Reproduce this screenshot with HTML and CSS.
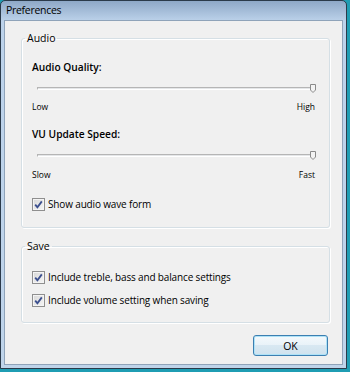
FILE: index.html
```html
<!DOCTYPE html>
<html lang="en">

<head>
	<meta charset="utf-8">
	<title>Preferences</title>
	<link rel="stylesheet" href="styles.css">
</head>

<body>

	<div class="window">
		<div class="titlebar">Preferences</div>

		<div class="client">

			<!-- *** Audio group *** -->
			<fieldset class="group group-audio">
				<legend>Audio</legend>
				<div class="group-body">
					<p class="setting-label">Audio Quality:</p>
					<div class="slider">
						<div class="track"></div>
						<svg class="thumb" width="6" height="9" viewBox="0 0 6 9">
							<path d="M0.5 0.5 H5.5 V6 L3 8.5 L0.5 6 Z" fill="#f3f3f3" stroke="#8a8a8a" />
						</svg>
					</div>
					<div class="ticks"><span>Low</span><span>High</span></div>

					<p class="setting-label label-second">VU Update Speed:</p>
					<div class="slider">
						<div class="track"></div>
						<svg class="thumb" width="6" height="9" viewBox="0 0 6 9">
							<path d="M0.5 0.5 H5.5 V6 L3 8.5 L0.5 6 Z" fill="#f3f3f3" stroke="#8a8a8a" />
						</svg>
					</div>
					<div class="ticks ticks-second"><span>Slow</span><span>Fast</span></div>

					<label class="check check-wave">
						<span class="box"><svg width="9" height="9" viewBox="0 0 9 9"><path d="M1.2 4.6 L3.4 7.2 L7.8 1.4" fill="none" stroke="#3b4f8e" stroke-width="1.8" /></svg></span>
						Show audio wave form
					</label>
				</div>
			</fieldset>

			<!-- *** Save group *** -->
			<fieldset class="group group-save">
				<legend>Save</legend>
				<div class="group-body">
					<label class="check check-first">
						<span class="box"><svg width="9" height="9" viewBox="0 0 9 9"><path d="M1.2 4.6 L3.4 7.2 L7.8 1.4" fill="none" stroke="#3b4f8e" stroke-width="1.8" /></svg></span>
						Include treble, bass and balance settings
					</label>
					<label class="check check-next">
						<span class="box"><svg width="9" height="9" viewBox="0 0 9 9"><path d="M1.2 4.6 L3.4 7.2 L7.8 1.4" fill="none" stroke="#3b4f8e" stroke-width="1.8" /></svg></span>
						Include volume setting when saving
					</label>
				</div>
			</fieldset>

			<div class="buttons">
				<button class="ok-btn">OK</button>
			</div>

		</div>
	</div>

</body>

</html>
```

FILE: styles.css
```css
body {
	margin: 0;
	padding: 0;
	width: 350px;
	height: 372px;
	background-color: #1f9db3;
	font-family: "Open Sans", "Noto Sans", sans-serif;
	font-size: 10px;
	color: #000;
	overflow: hidden;
}

.window {
	width: 347px;
	height: 369px;
	box-sizing: border-box;
	border: 1px solid #2b3a4a;
	border-radius: 5px 5px 0 0;
	padding: 0 3px 3px 3px;
	background: linear-gradient(#8ea8c7, #bcd2ea 20px, #bfd4ea);
	display: flex;
	flex-direction: column;
}

.titlebar {
	height: 19px;
	line-height: 19px;
	padding-left: 2px;
	font-size: 10.5px;
	letter-spacing: -0.3px;
}

.client {
	flex: 1;
	background-color: #f0f0f0;
	border: 1px solid #8fa3b9;
	display: flex;
	flex-direction: column;
}

/* group boxes */
.group {
	margin: 0 0 0 16px;
	padding: 0;
	width: 309px;
	box-sizing: border-box;
	border: 1px solid #d5dfe5;
	border-radius: 3px;
	box-shadow: inset 1px 1px 0 #fff, 1px 1px 0 #fff;
}

.group legend {
	margin-left: 3px;
	padding: 0 2px;
	line-height: 14px;
	font-size: 10.5px;
}

.group-audio {
	margin-top: 10px;
}

.group-save {
	margin-top: 11px;
}

.group-body {
	padding: 0 12px 0 10px;
}

.group-audio .group-body {
	padding-top: 15px;
	padding-bottom: 16px;
}

.group-save .group-body {
	padding-top: 17px;
	padding-bottom: 15px;
}

.setting-label {
	margin: 0;
	line-height: 14px;
	font-size: 10.2px;
	font-weight: 600;
}

.label-second {
	margin-top: 14px;
}

/* sliders */
.slider {
	margin: 10px 1px 0 5px;
	height: 10px;
	display: flex;
	align-items: flex-start;
}

.track {
	flex: 1;
	height: 1px;
	margin-top: 3px;
	background-color: #e4e6e8;
	border: 1px solid;
	border-color: #b5b5b5 #e0e0e0 #fff #b5b5b5;
}

.thumb {
	margin-left: -4px;
	flex: none;
}

.ticks {
	margin-top: 7px;
	display: flex;
	justify-content: space-between;
	line-height: 12px;
	font-size: 8.5px;
	padding-right: 2px;
}

.ticks-second {
	margin-top: 8px;
}

/* checkboxes */
.check {
	display: flex;
	align-items: center;
	gap: 3px;
	line-height: 14px;
	font-size: 10px;
	letter-spacing: -0.15px;
}

.check-wave {
	margin-top: 16px;
}

.check-next {
	margin-top: 9px;
}

.box {
	width: 11px;
	height: 11px;
	border: 1px solid #8f8f8f;
	background: linear-gradient(135deg, #d7d7d7, #f6f6f6);
	display: flex;
	align-items: center;
	justify-content: center;
	box-shadow: inset 0 0 0 1px #f4f4f4;
}

/* button row */
.buttons {
	display: flex;
	justify-content: flex-end;
	margin-top: 12px;
	padding-right: 14px;
}

.ok-btn {
	width: 75px;
	height: 21px;
	font-family: "Open Sans", "Noto Sans", sans-serif;
	font-size: 10.5px;
	border: 1px solid #3c7fb1;
	border-radius: 3px;
	background: linear-gradient(#f4f9fc, #e8f2f8 50%, #d8e8f2 50%, #cfe2ee);
	box-shadow: inset 0 0 0 1px #aee2f7;
	padding: 0;
}
```
